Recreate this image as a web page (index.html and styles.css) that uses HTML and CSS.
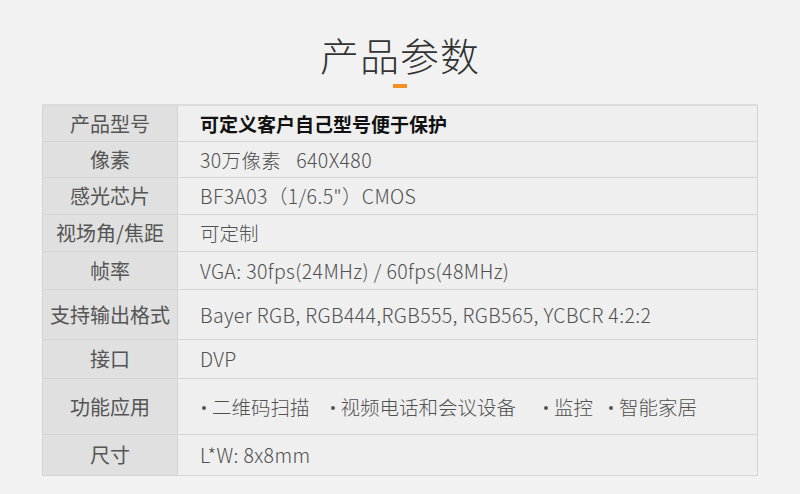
FILE: index.html
```html
<!DOCTYPE html>
<html lang="zh">
<head>
<meta charset="utf-8">
<link rel="stylesheet" href="styles.css">
</head>
<body>
<div class="page">
  <h1 class="title">产品参数</h1>
  <div class="accent"></div>
  <table class="spec">
    <tr class="r1"><th>产品型号</th><td class="strong">可定义客户自己型号便于保护</td></tr>
    <tr class="r2"><th>像素</th><td class="latin">30万像素<span class="gap">640X480</span></td></tr>
    <tr class="r3"><th>感光芯片</th><td class="latin">BF3A03（1/6.5"）CMOS</td></tr>
    <tr class="r4"><th>视场角/焦距</th><td>可定制</td></tr>
    <tr class="r5"><th>帧率</th><td class="latin">VGA: 30fps(24MHz) / 60fps(48MHz)</td></tr>
    <tr class="r6"><th>支持输出格式</th><td class="latin">Bayer RGB, RGB444,RGB555, RGB565, YCBCR 4:2:2</td></tr>
    <tr class="r7"><th>接口</th><td class="latin">DVP</td></tr>
    <tr class="r8"><th>功能应用</th><td><span class="item i1">二维码扫描</span><span class="item i2">视频电话和会议设备</span><span class="item i3">监控</span><span class="item">智能家居</span></td></tr>
    <tr class="r9"><th>尺寸</th><td class="latin">L*W: 8x8mm</td></tr>
  </table>
</div>
</body>
</html>
```

FILE: styles.css
```css
html, body {
  margin: 0;
  padding: 0;
  background: #f2f2f2;
}
.page {
  width: 800px;
  height: 494px;
  font-family: "Noto Sans CJK SC", "Noto Sans", sans-serif;
  display: flex;
  flex-direction: column;
  align-items: center;
  overflow: hidden;
}
.title {
  margin: 28px 0 0 0;
  font-size: 39px;
  line-height: 52px;
  font-weight: 300;
  color: #333;
  letter-spacing: 1px;
}
.accent {
  width: 14px;
  height: 4px;
  background: #f39326;
  margin-top: 4px;
  margin-bottom: 16px;
}
.spec {
  width: 716px;
  border-collapse: collapse;
  border: 1px solid #d4d4d4;
  border-top: 2px solid #dcdcdc;
}
.spec th, .spec td {
  border: 1px solid #d4d4d4;
  padding: 0;
  color: #555;
}
.spec th {
  width: 134px;
  background: #e0e0e0;
  font-weight: 400;
  font-size: 20px;
  text-align: center;
}
.spec td {
  background: #efefef;
  font-size: 19.5px;
  font-weight: 300;
  text-align: left;
  padding-left: 22px;
  color: #505050;
}
.spec td.latin {
  letter-spacing: 0.37px;
}
.gap {
  margin-left: 15px;
}
.spec td.strong {
  color: #111;
  font-weight: 700;
  font-size: 19px;
}
.r1 { height: 36px; }
.r2 { height: 36px; }
.r3 { height: 37px; }
.r4 { height: 37px; }
.r5 { height: 38px; }
.r6 { height: 50px; }
.r7 { height: 39px; }
.r8 { height: 56px; }
.r9 { height: 41px; }
.item::before {
  content: "";
  display: inline-block;
  width: 4px;
  height: 4px;
  border-radius: 50%;
  background: #555;
  vertical-align: middle;
  margin: 0 6px 3px 2px;
}
.i1 { margin-right: 19px; }
.i2 { margin-right: 26px; }
.i3 { margin-right: 14px; }
```
